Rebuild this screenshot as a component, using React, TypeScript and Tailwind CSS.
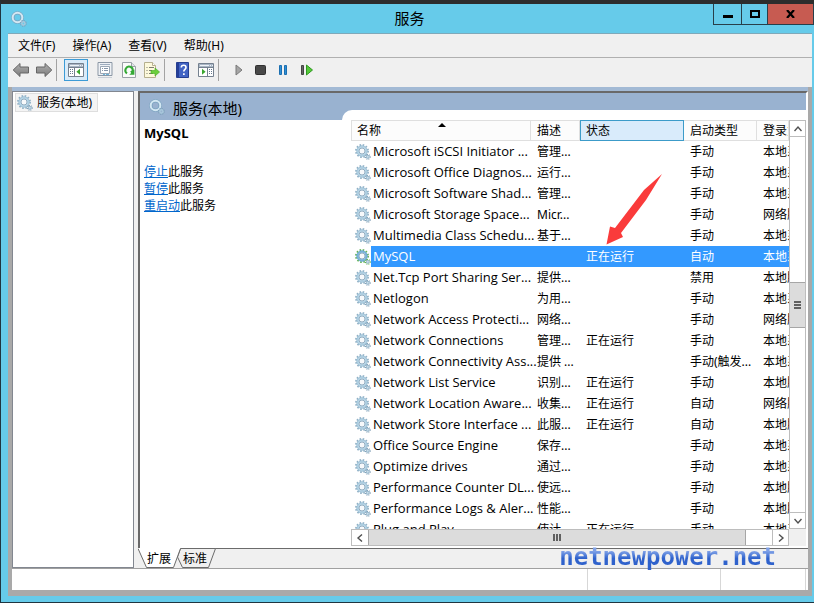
import React, { useState } from "react";

const services = [
  { name: "Microsoft iSCSI Initiator ...", desc: "管理...", status: "", start: "手动", logon: "本地系统" },
  { name: "Microsoft Office Diagnos...", desc: "运行...", status: "", start: "手动", logon: "本地系统" },
  { name: "Microsoft Software Shad...", desc: "管理...", status: "", start: "手动", logon: "本地系统" },
  { name: "Microsoft Storage Space...", desc: "Micr...", status: "", start: "手动", logon: "网络服务" },
  { name: "Multimedia Class Schedu...", desc: "基于...", status: "", start: "手动", logon: "本地系统" },
  { name: "MySQL", desc: "", status: "正在运行", start: "自动", logon: "本地系统" },
  { name: "Net.Tcp Port Sharing Ser...", desc: "提供...", status: "", start: "禁用", logon: "本地服务" },
  { name: "Netlogon", desc: "为用...", status: "", start: "手动", logon: "本地系统" },
  { name: "Network Access Protecti...", desc: "网络...", status: "", start: "手动", logon: "网络服务" },
  { name: "Network Connections", desc: "管理...", status: "正在运行", start: "手动", logon: "本地系统" },
  { name: "Network Connectivity Ass...", desc: "提供 ...", status: "", start: "手动(触发...", logon: "本地系统" },
  { name: "Network List Service", desc: "识别...", status: "正在运行", start: "手动", logon: "本地服务" },
  { name: "Network Location Aware...", desc: "收集...", status: "正在运行", start: "自动", logon: "网络服务" },
  { name: "Network Store Interface ...", desc: "此服...", status: "正在运行", start: "自动", logon: "本地服务" },
  { name: "Office Source Engine", desc: "保存...", status: "", start: "手动", logon: "本地系统" },
  { name: "Optimize drives", desc: "通过...", status: "", start: "手动", logon: "本地系统" },
  { name: "Performance Counter DL...", desc: "使远...", status: "", start: "手动", logon: "本地服务" },
  { name: "Performance Logs & Aler...", desc: "性能...", status: "", start: "手动", logon: "本地服务" },
  { name: "Plug and Play", desc: "使计...", status: "正在运行", start: "手动", logon: "本地系统" },
];

const menus = ["文件(F)", "操作(A)", "查看(V)", "帮助(H)"];

const GearIcon = ({ active = false }: { active?: boolean }) => (
  <svg width="16" height="16" viewBox="0 0 16 16" fill="none" className="shrink-0">
    <circle cx="7" cy="7" r="6.1" stroke={active ? "#62b356" : "#8fb0c6"} strokeWidth="1.7" strokeDasharray="1.6 1.59" />
    <circle cx="7" cy="7" r="4.3" stroke={active ? "#7db6dc" : "#b4d4e6"} strokeWidth="2.2" />
    <circle cx="7" cy="7" r="5.3" stroke={active ? "#5a9bc6" : "#8db1c9"} strokeWidth="0.6" />
    <circle cx="7" cy="7" r="3" fill="#f7f9fb" stroke="#7c9cb4" strokeWidth="0.8" />
    <circle cx="12.8" cy="12.8" r="2.4" stroke={active ? "#62b356" : "#84a2b8"} strokeWidth="1.2" strokeDasharray="1 0.88" />
    <circle cx="12.8" cy="12.8" r="1.5" fill="#c9dde9" stroke="#8fb1c8" strokeWidth="0.9" />
  </svg>
);

const RingIcon = () => (
  <svg width="16" height="16" viewBox="0 0 16 16" fill="none" className="shrink-0">
    <circle cx="6.5" cy="6.5" r="4.6" stroke="#7ba3bf" strokeWidth="3.4" />
    <circle cx="6.5" cy="6.5" r="4.8" stroke="#d3e8f3" strokeWidth="2" />
    <circle cx="12.4" cy="12.4" r="2.7" stroke="#7c9fb8" strokeWidth="1.4" strokeDasharray="1.2 0.9" />
    <circle cx="12.4" cy="12.4" r="1.6" stroke="#a9c9dc" strokeWidth="1.5" />
  </svg>
);

const ArrowIcon = ({ flip = false }: { flip?: boolean }) => (
  <svg width="18" height="16" viewBox="0 0 18 16" className={flip ? "-scale-x-100" : ""}>
    <defs>
      <linearGradient id="arrowFill" x1="0" y1="0" x2="0" y2="1">
        <stop offset="0" stopColor="#b0b0b0" />
        <stop offset="1" stopColor="#7a7a7a" />
      </linearGradient>
    </defs>
    <path d="M1.2 8 8 1.5V5h8.5v6H8v3.5z" fill="url(#arrowFill)" stroke="#666" strokeLinejoin="round" />
  </svg>
);

const TreePaneIcon = () => (
  <svg width="16" height="14" viewBox="0 0 16 14">
    <path d="M.5.5h15v13H.5z" fill="#fff" stroke="#75818f" />
    <path d="M1 1h14v3H1z" fill="#a9b6c5" />
    <path d="M2 2.5h9M12 2.5h1M14 2.5h1" stroke="#eef2f6" />
    <path d="M.5 4.5h15M6.5 5v8" stroke="#75818f" />
    <path d="M2 6.5h3M2 8.5h3M2 10.5h3" stroke="#66798e" strokeDasharray="1 1 2 0" />
    <path d="M12 5.8v6L8.4 8.8z" fill="#3aa62f" />
  </svg>
);

const ActionPaneIcon = () => (
  <svg width="16" height="14" viewBox="0 0 16 14">
    <path d="M.5.5h15v13H.5z" fill="#fff" stroke="#75818f" />
    <path d="M1 1h14v3H1z" fill="#a9b6c5" />
    <path d="M2 2.5h9M12 2.5h1M14 2.5h1" stroke="#eef2f6" />
    <path d="M.5 4.5h15M9.5 5v8" stroke="#75818f" />
    <path d="M11 6.5h3M11 8.5h3M11 10.5h3" stroke="#66798e" strokeDasharray="1 1 2 0" />
    <path d="M4 5.8v6l3.6-3z" fill="#3aa62f" />
  </svg>
);

const PropertiesIcon = () => (
  <svg width="16" height="16" viewBox="0 0 16 16">
    <path d="M1 .5h14v13H1z" fill="#eef1f5" stroke="#8b97a5" />
    <path d="M3 2.5h10" stroke="#9eadbe" />
    <path d="M3.5 4.5h9v7h-9z" fill="#fff" stroke="#9aa7b5" />
    <path d="M5 6.5h1M7 6.5h4M5 8.5h1M7 8.5h4" stroke="#8495a9" />
    <path d="M6 12.5h2M9 12.5h3" stroke="#6fb6dc" />
    <path d="M1 15.5h14" stroke="#c9d0d8" />
  </svg>
);

const RefreshIcon = () => (
  <svg width="14" height="16" viewBox="0 0 14 16">
    <path d="M.5.5h9l4 4v11H.5z" fill="#fbfbfb" stroke="#9aa0a6" />
    <path d="M9.5.5v4h4" fill="#e3e6e9" stroke="#9aa0a6" />
    <path d="M5 11.4A3.7 3.7 0 1 1 10.7 9" fill="none" stroke="#35a935" strokeWidth="2" />
    <path d="M12.4 7.6v5.2H7.2l2-1.8-1-1.5 1.6-1z" fill="#35a935" />
  </svg>
);

const ExportIcon = () => (
  <svg width="16" height="16" viewBox="0 0 16 16">
    <path d="M.5.5h8l3 3v12H.5z" fill="#fdf9dc" stroke="#b5af8e" />
    <path d="M8.5.5v3h3" fill="#fff" stroke="#b5af8e" />
    <path d="M2.5 5.5h1M5 5.5h5M2.5 8.5h1M5 8.5h3M2.5 11.5h1M5 11.5h4" stroke="#7d7d70" />
    <path d="M7 8.5h4V6l4.6 4-4.6 4v-2.5H7z" fill="#6bcf3c" stroke="#46a822" strokeWidth="0.6" />
  </svg>
);

const HelpIcon = () => (
  <svg width="13" height="16" viewBox="0 0 13 16">
    <path d="M.5.5h12v15H.5z" fill="#4264c4" stroke="#263f91" />
    <path d="M1 1h2v14H1z" fill="#243e98" />
    <path d="M5.3 5.5c0-3 4.7-3 4.7 0 0 1.8-2.2 1.9-2.2 4" fill="none" stroke="#fff" strokeWidth="1.6" />
    <path d="M7 11.2h1.7v1.7H7z" fill="#fff" />
  </svg>
);

const Chevron = ({ d }: { d: string }) => (
  <svg width="8" height="8" viewBox="0 0 8 8" fill="none" stroke="#505050" strokeWidth="1.4">
    <path d={d} />
  </svg>
);

const Separator = () => <div className="h-[22px] w-px bg-[#a3a3a3]" />;

const TitleBar = () => (
  <header className="flex h-[29px] shrink-0 items-start">
    <div className="flex h-full w-[98px] items-center pl-[3px]">
      <RingIcon />
    </div>
    <h1 className="h-full flex-1 text-center text-[15px] leading-[29px]">服务</h1>
    <div className="flex h-[21px] border border-t-0 border-[#283f4a]">
      <button aria-label="最小化" className="flex w-[28px] items-center justify-center border-r border-[#283f4a]">
        <span className="mt-1 h-[3px] w-[10px] bg-black" />
      </button>
      <button aria-label="最大化" className="flex w-[26px] items-center justify-center border-r border-[#283f4a]">
        <span className="h-2 w-[10px] border-2 border-black" />
      </button>
      <button aria-label="关闭" className="flex w-[45px] items-center justify-center bg-[#c75b51]">
        <svg width="9" height="8" viewBox="0 0 9 8" stroke="#000" strokeWidth="2.2">
          <path d="M1 0l7 8M8 0L1 8" />
        </svg>
      </button>
    </div>
  </header>
);

const Toolbar = () => (
  <div className="flex h-[29px] shrink-0 items-center bg-[#f0f0f0] pb-[5px] pl-1">
    <button aria-label="后退"><ArrowIcon /></button>
    <button aria-label="前进" className="ml-[5px] mr-[3px]"><ArrowIcon flip /></button>
    <Separator />
    <button aria-label="显示控制台树" className="mx-[7px] flex h-[22px] w-[24px] items-center justify-center border border-[#3c9bd6] bg-[#d9ebf9]">
      <TreePaneIcon />
    </button>
    <button aria-label="属性" className="ml-[2px]"><PropertiesIcon /></button>
    <button aria-label="刷新" className="ml-[9px]"><RefreshIcon /></button>
    <button aria-label="导出列表" className="ml-2 mr-1"><ExportIcon /></button>
    <Separator />
    <button aria-label="帮助" className="ml-[11px]"><HelpIcon /></button>
    <button aria-label="操作窗格" className="ml-[9px] mr-1"><ActionPaneIcon /></button>
    <Separator />
    <button aria-label="启动服务" className="ml-4">
      <svg width="8" height="12" viewBox="0 0 8 12">
        <path d="M1 1l6 5-6 5z" fill="#a5a5a5" stroke="#7b7b7b" />
      </svg>
    </button>
    <button aria-label="停止服务" className="ml-3">
      <svg width="11" height="10" viewBox="0 0 11 10">
        <rect x=".5" y=".5" width="10" height="9" rx="1" fill="#484848" stroke="#303030" />
      </svg>
    </button>
    <button aria-label="暂停服务" className="ml-[13px]">
      <svg width="9" height="10" viewBox="0 0 9 10" fill="#2d8fd6" stroke="#1c6fb0">
        <path d="M.5.5h2v9h-2zM5.5.5h2v9h-2z" />
      </svg>
    </button>
    <button aria-label="重启动服务" className="ml-[13px]">
      <svg width="12" height="12" viewBox="0 0 12 12">
        <path d="M.5 1.5h2v9h-2z" fill="#666" stroke="#444" />
        <path d="M5.5 1l6 5-6 5z" fill="#55c93a" stroke="#2f9a20" />
      </svg>
    </button>
  </div>
);

const headCell = "h-[21px] border-b border-r border-[#dfdfdf] bg-[#fcfcfc] p-0 text-left font-normal";

const ServiceTable = () => {
  const [selected, setSelected] = useState("MySQL");

  return (
    <table className="w-full table-fixed border-separate border-spacing-0">
      <colgroup>
        <col className="w-[180px]" />
        <col className="w-[49px]" />
        <col className="w-[104px]" />
        <col className="w-[73px]" />
        <col />
      </colgroup>
      <thead>
        <tr>
          <th className={`${headCell} relative border-l border-t`}>
            <button className="block w-full pl-[5px] text-left leading-[19px]">名称</button>
            <svg width="8" height="4" viewBox="0 0 8 4" className="absolute left-[86px] top-[2px]">
              <path d="M0 4l4-4 4 4z" />
            </svg>
          </th>
          <th className={`${headCell} border-t`}>
            <button className="block pl-[6px] leading-[19px]">描述</button>
          </th>
          <th className="h-[21px] border border-[#3c9bc9] bg-[#d9ebfb] p-0 text-left font-normal">
            <button className="block w-full pl-[5px] text-left leading-[19px]">状态</button>
          </th>
          <th className={`${headCell} border-t`}>
            <button className="block pl-[6px] leading-[19px]">启动类型</button>
          </th>
          <th className={`${headCell} overflow-hidden whitespace-nowrap border-t`}>
            <button className="block pl-[6px] leading-[19px]">登录为</button>
          </th>
        </tr>
      </thead>
      <tbody>
        {services.map((srv) => {
          const active = srv.name === selected;
          const tone = active ? "bg-[#3399ff] text-white" : "";
          return (
            <tr key={srv.name} onClick={() => setSelected(srv.name)} className="whitespace-nowrap leading-[21px]">
              <td className="p-0">
                <div className="flex h-[21px] items-center pl-1">
                  <GearIcon active={active} />
                  <span className={`h-full flex-1 pl-[2px] font-['Open_Sans',sans-serif] text-[13px] ${tone}`}>
                    {srv.name}
                  </span>
                </div>
              </td>
              <td className={`py-0 pl-[6px] pr-0 ${tone}`}>{srv.desc}</td>
              <td className={`py-0 pl-[6px] pr-0 ${tone}`}>{srv.status}</td>
              <td className={`py-0 pl-[6px] pr-0 ${tone}`}>{srv.start}</td>
              <td className={`overflow-hidden py-0 pl-[6px] pr-0 ${tone}`}>{srv.logon}</td>
            </tr>
          );
        })}
      </tbody>
    </table>
  );
};

const VerticalScroll = () => (
  <div className="flex w-[17px] shrink-0 flex-col border-x border-[#bdbdbd] bg-white">
    <button aria-label="向上滚动" className="flex h-[17px] shrink-0 items-center justify-center border-y border-[#bdbdbd]">
      <Chevron d="M.5 6L4 2l3.5 4" />
    </button>
    <div className="flex-[145]" />
    <div className="flex h-[46px] flex-col items-center justify-center gap-px border-y border-[#a6a6a6] bg-[#dcdcdc]">
      <span className="h-[2px] w-[7px] bg-[#606060]" />
      <span className="h-[2px] w-[7px] bg-[#606060]" />
      <span className="h-[2px] w-[7px] bg-[#606060]" />
    </div>
    <div className="flex-[185]" />
    <button aria-label="向下滚动" className="flex h-[17px] shrink-0 items-center justify-center border-y border-[#bdbdbd]">
      <Chevron d="M.5 2L4 6l3.5-4" />
    </button>
  </div>
);

const HorizontalScroll = () => (
  <div className="flex h-[17px] shrink-0">
    <div className="flex flex-1 border border-[#bdbdbd] bg-white">
      <button aria-label="向左滚动" className="flex w-4 items-center justify-center">
        <Chevron d="M6 .5L2 4l4 3.5" />
      </button>
      <div className="flex flex-[378] items-center justify-center gap-px border-x border-[#a6a6a6] bg-[#dcdcdc]">
        <span className="h-[7px] w-[2px] bg-[#606060]" />
        <span className="h-[7px] w-[2px] bg-[#606060]" />
        <span className="h-[7px] w-[2px] bg-[#606060]" />
      </div>
      <div className="flex-[26]" />
      <button aria-label="向右滚动" className="flex w-4 items-center justify-center border-l border-[#bdbdbd]">
        <Chevron d="M2 .5L6 4 2 7.5" />
      </button>
    </div>
    <div className="w-[17px] bg-[#f0f0f0]" />
  </div>
);

const Tabs = () => (
  <div className="relative flex h-5 shrink-0 items-start border-t border-[#6b6b6b] bg-[#f0f0f0]">
    <svg width="80" height="20" viewBox="0 0 80 20" className="absolute -top-px left-0">
      <path d="M42.5.5H77.5L70.5 19.5H44.5L39.5 9z" fill="#f0f0f0" stroke="#6b6b6b" />
      <path d="M0 0H42.5L35.5 19.5H8.5L0 .5" fill="#fff" />
      <path d="M0 .5L8.5 19.5H35.5L42.5.5" fill="none" stroke="#6b6b6b" />
    </svg>
    <button className="relative ml-[9px] leading-5">扩展</button>
    <button className="relative ml-3 leading-5">标准</button>
  </div>
);

const links = ["停止", "暂停", "重启动"];

const App = () => {
  return (
    <div className="flex h-screen flex-col border-b border-l border-t-4 border-b-[#1f3540] border-l-[#1f3540] border-t-[#2d2d2d] bg-[#66cbea] font-['Noto_Sans','Noto_Sans_CJK_SC',sans-serif] text-[12px] text-black">
      <div className="flex min-h-0 flex-1 flex-col pb-[6px] pl-[7px]">
        <TitleBar />
        <div className="mr-[2px] flex min-h-0 flex-1 flex-col border-t border-[#7fa9ba]">
          <nav className="flex h-[24px] shrink-0 items-center gap-[17px] border-b border-[#b0b0b0] bg-[#f0f0f0] pl-[10px]">
            {menus.map((menu) => (
              <button key={menu} className="leading-[22px]">{menu}</button>
            ))}
          </nav>
          <Toolbar />

          <div className="flex min-h-0 flex-1 flex-col border-x-4 border-b-[6px] border-[#a9a9a9] bg-[#f0f0f0]">
            <div className="h-1 shrink-0 bg-[#a3bad5]" />
            <div className="flex min-h-0 flex-1">
              {/* Console tree */}
              <aside className="w-[122px] shrink-0 border border-[#828790] bg-white">
                <button className="ml-[2px] mt-px flex h-[19px] w-[83px] items-center gap-1 border border-[#dedede] bg-[#f4f4f4] pl-px">
                  <GearIcon />
                  服务(本地)
                </button>
              </aside>

              <main className="ml-1 flex min-w-0 flex-1 flex-col">
                <div className="flex min-h-0 flex-1 flex-col border-l-2 border-r-2 border-t-2 border-[#696969] border-r-white bg-white">
                  <div className="flex h-[27px] shrink-0 items-stretch bg-[#99b2d0]">
                    <h2 className="flex w-[202px] shrink-0 items-center gap-2 pl-[9px] text-[15px]">
                      <RingIcon />
                      <span className="pt-1">服务(本地)</span>
                    </h2>
                    <div className="mt-[17px] flex-1 rounded-tl-[10px] bg-white" />
                  </div>
                  <div className="flex min-h-0 flex-1">
                    <section className="w-[211px] shrink-0 pl-1 pt-1">
                      <h3 className="text-[13px] font-bold leading-[19px]">MySQL</h3>
                      <ul className="mt-5 leading-[17px]">
                        {links.map((link) => (
                          <li key={link}>
                            <a href="#" className="text-[#0066cc] underline">{link}</a>此服务
                          </li>
                        ))}
                      </ul>
                    </section>
                    <section className="flex min-w-0 flex-1 flex-col">
                      <div className="flex min-h-0 flex-1">
                        <div className="relative min-w-0 flex-1 overflow-hidden">
                          <ServiceTable />
                          <svg width="57" height="71" viewBox="0 0 57 71" className="pointer-events-none absolute left-[255px] top-[54px]">
                            <path d="M56 0L38 16 9 54 4 52.500.5 70.500 17 63l-2-4L40 26z" fill="#fa3b3b" />
                          </svg>
                        </div>
                        <VerticalScroll />
                      </div>
                      <HorizontalScroll />
                      <div className="h-[2px] shrink-0" />
                    </section>
                  </div>
                </div>
                <Tabs />
              </main>
            </div>
            <footer className="relative flex h-[22px] shrink-0 border-t border-[#a0a0a0] bg-white">
              <div className="flex-1 border-r border-[#d7d7d7]" />
              <div className="w-[133px] border-r border-[#d7d7d7]" />
              <div className="w-[85px] border-r border-[#d7d7d7]" />
              <div className="w-[2px]" />
              <p className="absolute bottom-[19px] right-[32px] bg-gradient-to-b from-[#7d9fe6] from-30% to-[#2f62cc] to-55% bg-clip-text font-['DejaVu_Sans_Mono',monospace] text-[24px] font-bold leading-[28px] text-transparent">
                netnewpower.net
              </p>
            </footer>
          </div>
        </div>
      </div>
    </div>
  );
};

export default App;
